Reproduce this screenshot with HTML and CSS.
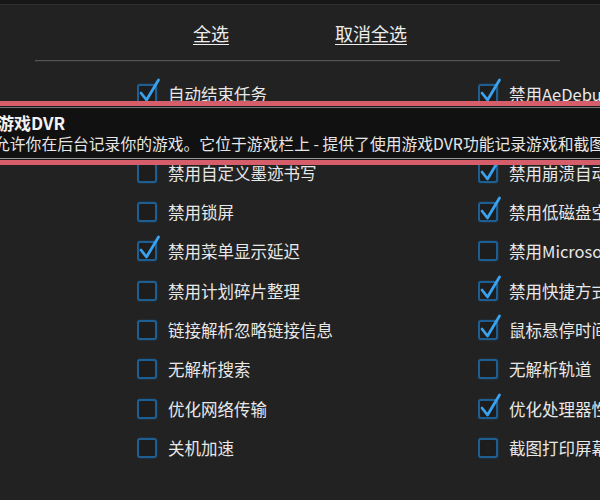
FILE: index.html
```html
<!DOCTYPE html>
<html lang="zh-CN">
<head>
<meta charset="utf-8">
<title>优化设置</title>
<link rel="stylesheet" href="styles.css">
</head>
<body>
<div class="topbar"></div>
<div class="actions">
  <a class="action" href="#">全选</a>
  <a class="action" href="#">取消全选</a>
</div>
<div class="sep"></div>
<div class="grid">
  <label class="item"><span class="box checked"><svg class="tick" viewBox="0 0 24 24"><path d="M4 14 L9.5 21 L21.5 1"/></svg></span><span class="txt">自动结束任务</span></label>
  <label class="item"><span class="box checked"><svg class="tick" viewBox="0 0 24 24"><path d="M4 14 L9.5 21 L21.5 1"/></svg></span><span class="txt">禁用AeDebug</span></label>

  <label class="item"><span class="box checked"><svg class="tick" viewBox="0 0 24 24"><path d="M4 14 L9.5 21 L21.5 1"/></svg></span><span class="txt">禁用游戏DVR</span></label>
  <label class="item"><span class="box checked"><svg class="tick" viewBox="0 0 24 24"><path d="M4 14 L9.5 21 L21.5 1"/></svg></span><span class="txt">禁用错误报告</span></label>

  <label class="item"><span class="box"></span><span class="txt">禁用自定义墨迹书写</span></label>
  <label class="item"><span class="box checked"><svg class="tick" viewBox="0 0 24 24"><path d="M4 14 L9.5 21 L21.5 1"/></svg></span><span class="txt">禁用崩溃自动重启</span></label>

  <label class="item"><span class="box"></span><span class="txt">禁用锁屏</span></label>
  <label class="item"><span class="box checked"><svg class="tick" viewBox="0 0 24 24"><path d="M4 14 L9.5 21 L21.5 1"/></svg></span><span class="txt">禁用低磁盘空间检查</span></label>

  <label class="item"><span class="box checked"><svg class="tick" viewBox="0 0 24 24"><path d="M4 14 L9.5 21 L21.5 1"/></svg></span><span class="txt">禁用菜单显示延迟</span></label>
  <label class="item"><span class="box"></span><span class="txt">禁用Microsoft客户体验</span></label>

  <label class="item"><span class="box"></span><span class="txt">禁用计划碎片整理</span></label>
  <label class="item"><span class="box checked"><svg class="tick" viewBox="0 0 24 24"><path d="M4 14 L9.5 21 L21.5 1"/></svg></span><span class="txt">禁用快捷方式小箭头</span></label>

  <label class="item"><span class="box"></span><span class="txt">链接解析忽略链接信息</span></label>
  <label class="item"><span class="box checked"><svg class="tick" viewBox="0 0 24 24"><path d="M4 14 L9.5 21 L21.5 1"/></svg></span><span class="txt">鼠标悬停时间缩短</span></label>

  <label class="item"><span class="box"></span><span class="txt">无解析搜索</span></label>
  <label class="item"><span class="box"></span><span class="txt">无解析轨道</span></label>

  <label class="item"><span class="box"></span><span class="txt">优化网络传输</span></label>
  <label class="item"><span class="box checked"><svg class="tick" viewBox="0 0 24 24"><path d="M4 14 L9.5 21 L21.5 1"/></svg></span><span class="txt">优化处理器性能</span></label>

  <label class="item"><span class="box"></span><span class="txt">关机加速</span></label>
  <label class="item"><span class="box"></span><span class="txt">截图打印屏幕键</span></label>
</div>

<div class="tooltip">
  <div class="tip-body">
    <div class="tip-title">游戏DVR</div>
    <div class="tip-desc">允许你在后台记录你的游戏。它位于游戏栏上 - 提供了使用游戏DVR功能记录游戏和截图</div>
  </div>
</div>
</body>
</html>
```

FILE: styles.css
```css
html, body {
  margin: 0;
  padding: 0;
}
body {
  width: 600px;
  height: 500px;
  overflow: hidden;
  position: relative;
  background: #222222;
  color: #e6e6e6;
  font-family: "Noto Sans CJK SC", "Open Sans", "Noto Sans", sans-serif;
}
.topbar {
  height: 4px;
  background: #161616;
  border-bottom: 1px solid #2f2f2f;
}
.actions {
  display: flex;
  gap: 106px;
  margin-top: 16px;
  padding-left: 193px;
  height: 24px;
}
.action {
  color: #ececec;
  font-size: 18px;
  line-height: 24px;
  text-decoration: underline;
  text-underline-offset: 3px;
  text-decoration-thickness: 1px;
}
.sep {
  margin: 15px 0 0 35px;
  width: 525px;
  height: 1px;
  background: #555555;
  border-bottom: 1px solid #2c2c2c;
}
.grid {
  display: grid;
  grid-template-columns: 341px 200px;
  grid-auto-rows: 39.33px;
  margin-top: 12.3px;
  padding-left: 137px;
}
.item {
  display: flex;
  align-items: center;
  gap: 11px;
  white-space: nowrap;
  overflow: hidden;
}
.box {
  position: relative;
  flex: none;
  width: 20px;
  height: 20px;
  box-sizing: border-box;
  border: 2px solid #1d5f92;
  border-radius: 3px;
  background: #1d1d1d;
  box-shadow: 0 0 2px rgba(40, 120, 190, 0.45);
}
.tick {
  position: absolute;
  left: -2px;
  top: -7px;
  width: 24px;
  height: 24px;
  overflow: visible;
}
.tick path {
  fill: none;
  stroke: #3aa2ee;
  stroke-width: 2.8;
  stroke-linecap: round;
  stroke-linejoin: round;
}
.txt {
  font-size: 16.5px;
  line-height: 22px;
  color: #e8e8e8;
}
.tooltip {
  position: absolute;
  top: 101px;
  left: 0;
  width: 100%;
  border-top: 5px solid #d65e6a;
  border-bottom: 5px solid #d65e6a;
  background: #111111;
}
.tip-body {
  border-top: 1px solid #1a1a1a;
  border-bottom: 1px solid #1a1a1a;
  box-shadow: inset 0 1px 0 #777777, inset 0 -1px 0 #9a9a9a;
  padding: 5px 0 5px 0;
  margin-left: -5px;
  white-space: nowrap;
}
.tip-title {
  font-size: 17px;
  font-weight: bold;
  line-height: 21px;
  margin-left: 2px;
  color: #f2f2f2;
}
.tip-desc {
  font-size: 15.8px;
  line-height: 21px;
  margin-left: -1px;
  color: #e6e6e6;
}
```
